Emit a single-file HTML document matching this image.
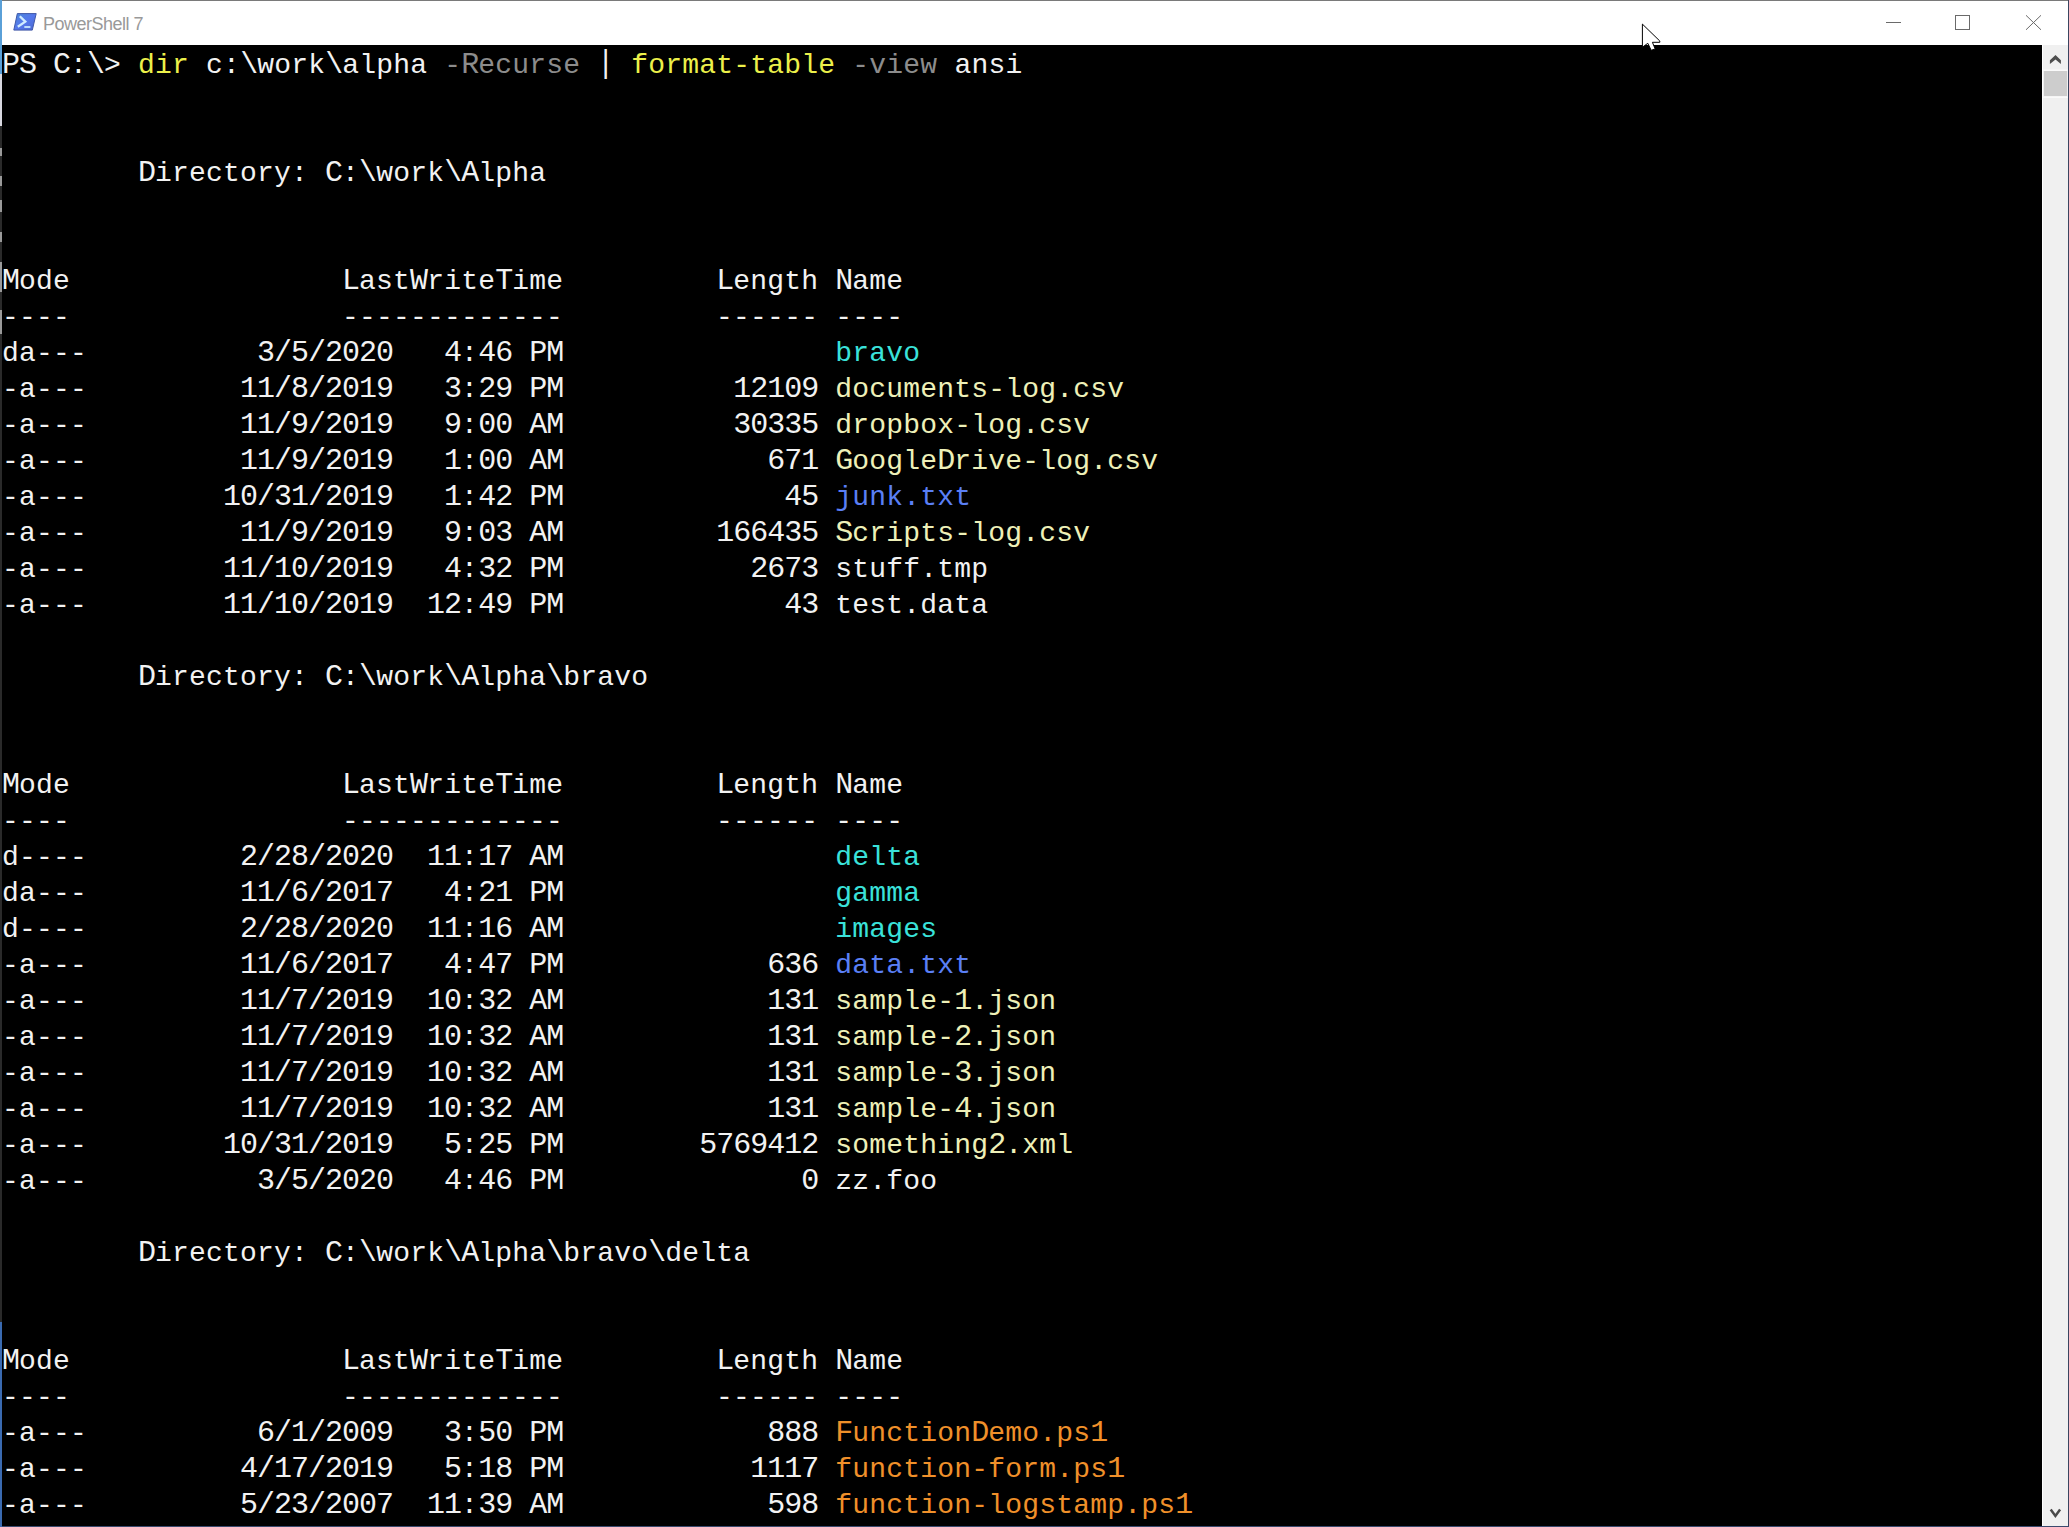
<!DOCTYPE html>
<html><head><meta charset="utf-8">
<style>
html,body{margin:0;padding:0;}
body{width:2069px;height:1527px;position:relative;overflow:hidden;background:#000;}
#title{position:absolute;left:0;top:0;width:2069px;height:45px;background:#fff;}
#tborder{position:absolute;left:0;top:0;width:2069px;height:1px;background:#7a7a7a;}
#ttext{position:absolute;left:43px;top:14px;font-family:"Liberation Sans",sans-serif;font-size:18px;color:#999;white-space:pre;line-height:20px;letter-spacing:-0.5px;}
.ln{position:absolute;left:2px;white-space:pre;font-family:"Liberation Mono",monospace;font-size:28px;letter-spacing:0.2px;line-height:36px;height:36px;color:#f2f2f2;}
.y{color:#ecf04a}
.g{color:#8c8c8c}
.u{font-size:30px;letter-spacing:-1px;line-height:0;}
.pp{display:inline-block;transform:translateY(-0.9px) scaleY(1.12);transform-origin:50% 78%;}
.c{color:#3ae2da}
.l{color:#eef0b8}
.b{color:#5a7ff5}
.o{color:#f0902a}
#sb{position:absolute;left:2042px;top:45px;width:26px;height:1481px;background:#f0f0f0;border-left:1px solid #fff;box-sizing:border-box;}
#thumb{position:absolute;left:2044px;top:71px;width:23px;height:25px;background:#cdcdcd;}
#rborder{position:absolute;left:2068px;top:0;width:1px;height:1527px;background:#3a4560;}
#bborder{position:absolute;left:0;top:1526px;width:2069px;height:1px;background:#3a4a6e;}
#lb1{position:absolute;left:0;top:0;width:2px;height:74px;background:#5aa0d8;}
#lb2{position:absolute;left:0;top:74px;width:2px;height:52px;background:#d8d8e0;}
#lb3{position:absolute;left:0;top:126px;width:2px;height:1196px;background:#2a2a2a;}
#lb4{position:absolute;left:0;top:1322px;width:2px;height:205px;background:#3a6ab0;}
.lbs{position:absolute;left:0;width:2px;background:#9a9a9a;}
svg{position:absolute;left:0;top:0;}
</style></head><body>
<div id="title"></div>
<div id="tborder"></div>
<div id="ttext">PowerShell 7</div>
<svg width="2069" height="60" viewBox="0 0 2069 60">
  <defs>
    <linearGradient id="ig" x1="0" y1="0" x2="1" y2="1">
      <stop offset="0" stop-color="#4a88d8"/>
      <stop offset="0.5" stop-color="#5578ec"/>
      <stop offset="1" stop-color="#4a68d0"/>
    </linearGradient>
  </defs>
  <polygon points="17.3,13.6 36.2,13.6 32.3,30.1 13.8,30.1" fill="url(#ig)" stroke="#4058a8" stroke-width="1"/>
  <polyline points="19.8,16.3 25.3,21.7 17.8,26.8" fill="none" stroke="#d0ecff" stroke-width="2.3"/>
  <line x1="24.3" y1="27" x2="30.4" y2="27" stroke="#c8e8ff" stroke-width="1.8"/>
  <line x1="1886" y1="22.5" x2="1901" y2="22.5" stroke="#6a6a6a" stroke-width="1"/>
  <rect x="1955.5" y="15.5" width="14" height="14" fill="none" stroke="#6a6a6a" stroke-width="1"/>
  <line x1="2026" y1="15.3" x2="2041" y2="29.8" stroke="#6a6a6a" stroke-width="1"/>
  <line x1="2041" y1="15.3" x2="2026" y2="29.8" stroke="#6a6a6a" stroke-width="1"/>
</svg>
<div id="lines">
<div class="ln" style="top:47.85px"><span class="u">PS</span> <span class="u">C</span>:<span class="u">\</span>&gt; <span class="y">dir</span> c:<span class="u">\</span>work<span class="u">\</span>alpha <span class="g">-<span class="u">R</span>ecurse</span> <span class="pp">|</span> <span class="y">format-table</span><span class="g"> -view</span> ansi</div>
<div class="ln" style="top:155.85px">        <span class="u">D</span>irectory: <span class="u">C</span>:<span class="u">\</span>work<span class="u">\A</span>lpha</div>
<div class="ln" style="top:263.85px"><span class="u">M</span>ode                <span class="u">L</span>ast<span class="u">W</span>rite<span class="u">T</span>ime         <span class="u">L</span>ength <span class="u">N</span>ame</div>
<div class="ln" style="top:299.85px">----                -------------         ------ ----</div>
<div class="ln" style="top:335.85px">da---          <span class="u">3/5/2020</span>   <span class="u">4</span>:<span class="u">46</span> <span class="u">PM</span>                <span class="c">bravo</span></div>
<div class="ln" style="top:371.85px">-a---         <span class="u">11/8/2019</span>   <span class="u">3</span>:<span class="u">29</span> <span class="u">PM</span>          <span class="u">12109</span> <span class="l">documents-log.csv</span></div>
<div class="ln" style="top:407.85px">-a---         <span class="u">11/9/2019</span>   <span class="u">9</span>:<span class="u">00</span> <span class="u">AM</span>          <span class="u">30335</span> <span class="l">dropbox-log.csv</span></div>
<div class="ln" style="top:443.85px">-a---         <span class="u">11/9/2019</span>   <span class="u">1</span>:<span class="u">00</span> <span class="u">AM</span>            <span class="u">671</span> <span class="l"><span class="u">G</span>oogle<span class="u">D</span>rive-log.csv</span></div>
<div class="ln" style="top:479.85px">-a---        <span class="u">10/31/2019</span>   <span class="u">1</span>:<span class="u">42</span> <span class="u">PM</span>             <span class="u">45</span> <span class="b">junk.txt</span></div>
<div class="ln" style="top:515.85px">-a---         <span class="u">11/9/2019</span>   <span class="u">9</span>:<span class="u">03</span> <span class="u">AM</span>         <span class="u">166435</span> <span class="l"><span class="u">S</span>cripts-log.csv</span></div>
<div class="ln" style="top:551.85px">-a---        <span class="u">11/10/2019</span>   <span class="u">4</span>:<span class="u">32</span> <span class="u">PM</span>           <span class="u">2673</span> stuff.tmp</div>
<div class="ln" style="top:587.85px">-a---        <span class="u">11/10/2019</span>  <span class="u">12</span>:<span class="u">49</span> <span class="u">PM</span>             <span class="u">43</span> test.data</div>
<div class="ln" style="top:659.85px">        <span class="u">D</span>irectory: <span class="u">C</span>:<span class="u">\</span>work<span class="u">\A</span>lpha<span class="u">\</span>bravo</div>
<div class="ln" style="top:767.85px"><span class="u">M</span>ode                <span class="u">L</span>ast<span class="u">W</span>rite<span class="u">T</span>ime         <span class="u">L</span>ength <span class="u">N</span>ame</div>
<div class="ln" style="top:803.85px">----                -------------         ------ ----</div>
<div class="ln" style="top:839.85px">d----         <span class="u">2/28/2020</span>  <span class="u">11</span>:<span class="u">17</span> <span class="u">AM</span>                <span class="c">delta</span></div>
<div class="ln" style="top:875.85px">da---         <span class="u">11/6/2017</span>   <span class="u">4</span>:<span class="u">21</span> <span class="u">PM</span>                <span class="c">gamma</span></div>
<div class="ln" style="top:911.85px">d----         <span class="u">2/28/2020</span>  <span class="u">11</span>:<span class="u">16</span> <span class="u">AM</span>                <span class="c">images</span></div>
<div class="ln" style="top:947.85px">-a---         <span class="u">11/6/2017</span>   <span class="u">4</span>:<span class="u">47</span> <span class="u">PM</span>            <span class="u">636</span> <span class="b">data.txt</span></div>
<div class="ln" style="top:983.85px">-a---         <span class="u">11/7/2019</span>  <span class="u">10</span>:<span class="u">32</span> <span class="u">AM</span>            <span class="u">131</span> <span class="l">sample-<span class="u">1</span>.json</span></div>
<div class="ln" style="top:1019.85px">-a---         <span class="u">11/7/2019</span>  <span class="u">10</span>:<span class="u">32</span> <span class="u">AM</span>            <span class="u">131</span> <span class="l">sample-<span class="u">2</span>.json</span></div>
<div class="ln" style="top:1055.85px">-a---         <span class="u">11/7/2019</span>  <span class="u">10</span>:<span class="u">32</span> <span class="u">AM</span>            <span class="u">131</span> <span class="l">sample-<span class="u">3</span>.json</span></div>
<div class="ln" style="top:1091.85px">-a---         <span class="u">11/7/2019</span>  <span class="u">10</span>:<span class="u">32</span> <span class="u">AM</span>            <span class="u">131</span> <span class="l">sample-<span class="u">4</span>.json</span></div>
<div class="ln" style="top:1127.85px">-a---        <span class="u">10/31/2019</span>   <span class="u">5</span>:<span class="u">25</span> <span class="u">PM</span>        <span class="u">5769412</span> <span class="l">something<span class="u">2</span>.xml</span></div>
<div class="ln" style="top:1163.85px">-a---          <span class="u">3/5/2020</span>   <span class="u">4</span>:<span class="u">46</span> <span class="u">PM</span>              <span class="u">0</span> zz.foo</div>
<div class="ln" style="top:1235.85px">        <span class="u">D</span>irectory: <span class="u">C</span>:<span class="u">\</span>work<span class="u">\A</span>lpha<span class="u">\</span>bravo<span class="u">\</span>delta</div>
<div class="ln" style="top:1343.85px"><span class="u">M</span>ode                <span class="u">L</span>ast<span class="u">W</span>rite<span class="u">T</span>ime         <span class="u">L</span>ength <span class="u">N</span>ame</div>
<div class="ln" style="top:1379.85px">----                -------------         ------ ----</div>
<div class="ln" style="top:1415.85px">-a---          <span class="u">6/1/2009</span>   <span class="u">3</span>:<span class="u">50</span> <span class="u">PM</span>            <span class="u">888</span> <span class="o"><span class="u">F</span>unction<span class="u">D</span>emo.ps<span class="u">1</span></span></div>
<div class="ln" style="top:1451.85px">-a---         <span class="u">4/17/2019</span>   <span class="u">5</span>:<span class="u">18</span> <span class="u">PM</span>           <span class="u">1117</span> <span class="o">function-form.ps<span class="u">1</span></span></div>
<div class="ln" style="top:1487.85px">-a---         <span class="u">5/23/2007</span>  <span class="u">11</span>:<span class="u">39</span> <span class="u">AM</span>            <span class="u">598</span> <span class="o">function-logstamp.ps<span class="u">1</span></span></div>
</div>
<div id="sb"></div>
<div id="thumb"></div>
<svg width="2069" height="1527" viewBox="0 0 2069 1527">
  <polygon points="2049.9,60.3 2055.5,54.9 2060.9,60.3 2060.9,64 2055.5,59.4 2049.9,64" fill="#4e4e4e"/>
  <polyline points="2050.7,1509.4 2055.4,1515.9 2060.1,1509.4" fill="none" stroke="#4a4a4a" stroke-width="2.5"/>
  <rect x="2043" y="69.5" width="25" height="1.5" fill="#fafafa"/>
  <rect x="2043" y="96.5" width="25" height="1.5" fill="#fafafa"/>
  <polygon points="1642.4,24.1 1659.8,41 1659.8,42.3 1652.4,42.3 1655.2,48.9 1651.2,50.3 1647.8,43.3 1642.4,47.2" fill="#fff" stroke="#000" stroke-width="1" stroke-linejoin="miter"/>
</svg>
<div id="rborder"></div>
<div id="bborder"></div>
<div id="lb1"></div><div id="lb2"></div><div id="lb3"></div><div id="lb4"></div><div class="lbs" style="top:148px;height:8px"></div><div class="lbs" style="top:176px;height:10px"></div><div class="lbs" style="top:200px;height:12px"></div><div class="lbs" style="top:232px;height:10px"></div><div class="lbs" style="top:262px;height:30px"></div><div class="lbs" style="top:310px;height:24px"></div>
</body></html>
